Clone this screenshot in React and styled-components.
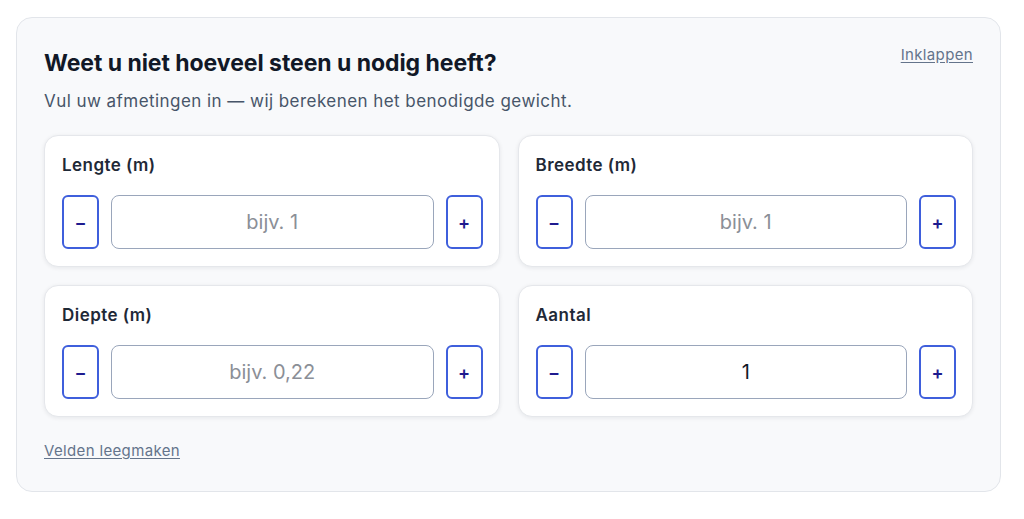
import React, { useState } from "react";
import styled, { createGlobalStyle } from "styled-components";

const GlobalStyle = createGlobalStyle`
  body {
    margin: 0;
    background: #ffffff;
    font-family: Inter, "Liberation Sans", sans-serif;
  }
`;

const Panel = styled.section`
  box-sizing: border-box;
  width: 985px;
  margin: 17px 0 0 16px;
  padding: 29px 27px 30px 27px;
  background: #f8f9fb;
  border: 1px solid #e2e5ea;
  border-radius: 16px;
`;

const Header = styled.div`
  display: flex;
  justify-content: space-between;
  align-items: flex-start;
`;

const Title = styled.h2`
  margin: 0;
  font-size: 23px;
  line-height: 32px;
  font-weight: 700;
  color: #111827;
  letter-spacing: -0.05px;
`;

const Subtitle = styled.p`
  margin: 10px 0 22px;
  font-size: 17px;
  line-height: 24px;
  color: #475569;
  letter-spacing: 0.45px;
`;

const TextLink = styled.a`
  font-size: 15px;
  line-height: 20px;
  color: #64748b;
  letter-spacing: 0.35px;
  text-decoration: underline;
  text-underline-offset: 2px;
  cursor: pointer;
  margin-top: ${(p) => p.$top || 0}px;
  display: inline-block;
`;

const Grid = styled.div`
  display: grid;
  grid-template-columns: 1fr 1fr;
  gap: 18px;
`;

const Card = styled.div`
  box-sizing: border-box;
  padding: 17px 16px 17px 17px;
  background: #ffffff;
  border: 1px solid #e5e7eb;
  border-radius: 14px;
  box-shadow: 0 1px 4px rgba(15, 23, 42, 0.08);
`;

const Label = styled.div`
  font-size: 17px;
  line-height: 24px;
  font-weight: 600;
  color: #1f2937;
  letter-spacing: 0.45px;
  margin-bottom: 18px;
`;

const Controls = styled.div`
  display: flex;
  gap: 12px;
  height: 54px;
`;

const StepButton = styled.button`
  box-sizing: border-box;
  flex: 0 0 37px;
  width: 37px;
  height: 54px;
  padding: 0;
  border: 2px solid #3f5fdc;
  border-radius: 6px;
  background: #ffffff;
  color: #1e1b8f;
  font-family: inherit;
  font-size: 18px;
  font-weight: 600;
  display: flex;
  align-items: center;
  justify-content: center;
  cursor: pointer;
`;

const Input = styled.input`
  box-sizing: border-box;
  flex: 1;
  min-width: 0;
  height: 54px;
  border: 1px solid #9aa6bb;
  border-radius: 8px;
  background: #ffffff;
  text-align: center;
  font-family: inherit;
  font-size: 20px;
  color: #111827;
  outline: none;
  &::placeholder {
    color: #8b8f97;
  }
`;

const fields = [
  { key: "lengte", label: "Lengte (m)", placeholder: "bijv. 1", initial: "" },
  { key: "breedte", label: "Breedte (m)", placeholder: "bijv. 1", initial: "" },
  { key: "diepte", label: "Diepte (m)", placeholder: "bijv. 0,22", initial: "" },
  { key: "aantal", label: "Aantal", placeholder: "", initial: "1" },
];

function Field({ label, placeholder, value, onChange }) {
  return (
    <Card>
      <Label>{label}</Label>
      <Controls>
        <StepButton aria-label="min">−</StepButton>
        <Input
          value={value}
          placeholder={placeholder}
          onChange={(e) => onChange(e.target.value)}
        />
        <StepButton aria-label="plus">+</StepButton>
      </Controls>
    </Card>
  );
}

export default function App() {
  const [values, setValues] = useState(
    Object.fromEntries(fields.map((f) => [f.key, f.initial]))
  );
  return (
    <>
      <GlobalStyle />
      <Panel>
        <Header>
          <Title>Weet u niet hoeveel steen u nodig heeft?</Title>
          <TextLink $top={-2}>Inklappen</TextLink>
        </Header>
        <Subtitle>
          Vul uw afmetingen in — wij berekenen het benodigde gewicht.
        </Subtitle>
        <Grid>
          {fields.map((f) => (
            <Field
              key={f.key}
              label={f.label}
              placeholder={f.placeholder}
              value={values[f.key]}
              onChange={(v) => setValues({ ...values, [f.key]: v })}
            />
          ))}
        </Grid>
        <TextLink $top={24}>Velden leegmaken</TextLink>
      </Panel>
    </>
  );
}
